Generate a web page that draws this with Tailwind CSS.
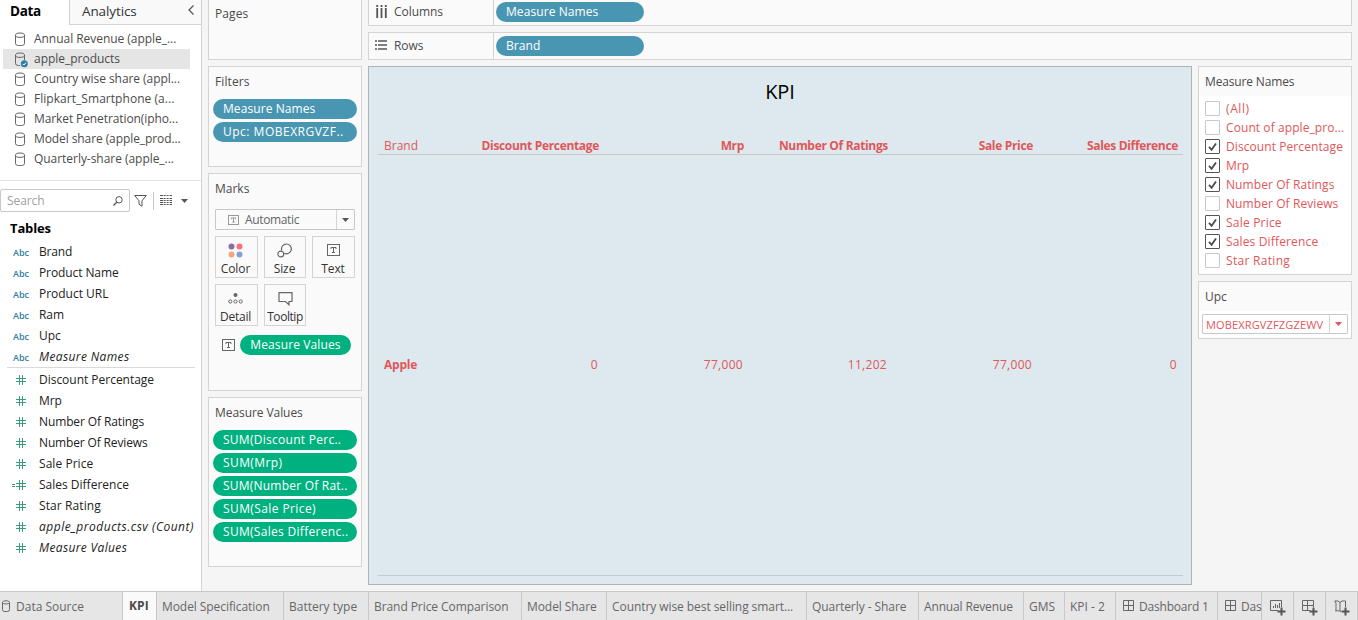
<!DOCTYPE html>
<html lang="en">
<head>
<meta charset="utf-8">
<title>KPI</title>
<script src="https://cdn.jsdelivr.net/npm/@tailwindcss/browser@4"></script>
</head>
<body class="w-[1358px] h-[620px] overflow-hidden bg-[#f5f5f5] font-['Open_Sans','Noto_Sans',sans-serif] text-[12px] leading-[20px] tracking-[-0.07px] text-[#4b4b4b] whitespace-nowrap">
<svg class="hidden">
  <symbol id="db" viewBox="0 0 12 15"><g fill="none" stroke="#666"><ellipse cx="6" cy="3.200" rx="4.500" ry="2.200"/><path d="M1.500 3.200V11.500Q1.500 13.500 4.500 13.500H7.500Q10.500 13.500 10.500 11.500V3.200"/></g></symbol>
  <symbol id="dbc" viewBox="0 0 14 16"><g fill="none" stroke="#666"><ellipse cx="6" cy="3.200" rx="4.500" ry="2.200"/><path d="M1.500 3.200V11.500Q1.500 13.500 4.500 13.500H6M10.500 3.200V8"/></g><circle cx="10.300" cy="11.800" r="3.500" fill="#2f7ea3"/><path d="M8.600 11.900l1.200 1.200 2.200-2.500" fill="none" stroke="#fff"/></symbol>
  <symbol id="hash" viewBox="0 0 10 10"><path d="M3.500 0v10M6.500 0v10M0 3.500h10M0 6.500h10" fill="none" stroke="#3a9d7d"/></symbol>
  <symbol id="ticon" viewBox="0 0 13 12"><rect x=".5" y=".5" width="12" height="11" fill="none" stroke="currentColor"/><path d="M4 5V3.500h5V5M6.500 3.500v5M5 8.500h3" fill="none" stroke="currentColor"/></symbol>
  <symbol id="tick" viewBox="0 0 15 15"><path d="M4 7.800l2.600 3L11 4.500" fill="none" stroke="#4b4b4b" stroke-width="1.800"/></symbol>
  <symbol id="grid" viewBox="0 0 11 11"><path d="M.5.5h10v10H.5zM5.500 0v11M0 5.500h11" fill="none" stroke="#666"/></symbol>
</svg>
<div class="flex flex-col h-[620px]">
<div class="flex h-[591px]">

  <!-- data pane -->
  <aside class="w-[202px] h-full bg-white border-r border-[#d4d4d4] shrink-0">
    <div class="flex h-[25px] text-[13.500px] text-[#333]">
      <div class="w-[69px] pl-[10px] pt-[1px] font-bold text-black tracking-[-0.35px]">Data</div>
      <div class="flex-1 flex justify-between bg-[#f9f9f9] border-l border-b border-[#d4d4d4] pl-3 pr-[7px] pt-[1px]"><span class="tracking-[-0.1px]">Analytics</span>
        <svg class="w-[6px] h-[10px] mt-1" viewBox="0 0 6 10"><path d="M5.500.5L1 5l4.500 4.500" fill="none" stroke="#555" stroke-width="1.200"/></svg></div>
    </div>
    <div class="pt-[4px] h-[156px] border-b border-[#e0e0e0]">
      <div class="flex h-5 pl-[14px]"><svg class="w-3 h-[15px] mt-[3px] mr-2"><use href="#db"/></svg><span class="tracking-[-0.04px]">Annual Revenue (apple_...</span></div>
      <div class="flex h-5 ml-[3px] mr-[11px] pl-[11px] bg-[#e5e5e5]"><svg class="w-[14px] h-4 mt-[3px] mr-1.5"><use href="#dbc"/></svg><span class="tracking-[-0.02px]">apple_products</span></div>
      <div class="flex h-5 pl-[14px]"><svg class="w-3 h-[15px] mt-[3px] mr-2"><use href="#db"/></svg><span class="tracking-[-0.06px]">Country wise share (appl...</span></div>
      <div class="flex h-5 pl-[14px]"><svg class="w-3 h-[15px] mt-[3px] mr-2"><use href="#db"/></svg><span class="tracking-[0.04px]">Flipkart_Smartphone (a...</span></div>
      <div class="flex h-5 pl-[14px]"><svg class="w-3 h-[15px] mt-[3px] mr-2"><use href="#db"/></svg><span class="tracking-[-0.1px]">Market Penetration(ipho...</span></div>
      <div class="flex h-5 pl-[14px]"><svg class="w-3 h-[15px] mt-[3px] mr-2"><use href="#db"/></svg><span class="tracking-[-0.09px]">Model share (apple_prod...</span></div>
      <div class="flex h-5 pl-[14px]"><svg class="w-3 h-[15px] mt-[3px] mr-2"><use href="#db"/></svg><span class="tracking-[-0.04px]">Quarterly-share (apple_...</span></div>
    </div>
    <div class="flex items-center mt-2 h-[23px]">
      <div class="flex items-center justify-between w-[130px] h-[23px] border border-[#c8c8c8] rounded-[2px] pl-[6px] pr-[6px] text-[#a0a0a0]"><span>Search</span>
        <svg class="w-[10px] h-[10px]" viewBox="0 0 10 10"><circle cx="6" cy="3.800" r="3.200" fill="none" stroke="#555"/><path d="M3.700 6.200L.5 9.500" stroke="#555" stroke-width="1.300"/></svg></div>
      <svg class="w-[13px] h-[12px] ml-1" viewBox="0 0 13 12"><path d="M.7.5h11.600L8 5.800v5.400L5 9.200V5.800z" fill="none" stroke="#555"/></svg>
      <div class="w-px h-[18px] bg-[#c8c8c8] ml-[6px]"></div>
      <svg class="w-[12px] h-[10px] ml-[6px] mb-[2px]" viewBox="0 0 12 10"><path d="M0 .5h12M0 3.500h12M0 5.500h12M0 7.500h12M0 9.500h12" stroke="#555" stroke-dasharray="3 .6 2 1 2 1 3"/></svg>
      <svg class="w-[7px] h-[4px] ml-[9px]" viewBox="0 0 7 4"><path d="M0 0h7L3.500 4z" fill="#555"/></svg>
    </div>
    <div class="pl-[10px] mt-[5px] h-[24px] font-bold text-[13px] leading-[22px] text-black tracking-[-0.15px]">Tables</div>
    <div class="text-[#222] leading-[21px]">
      <div class="flex h-[21px] pl-[13px]"><b class="w-[26px] text-[9px] font-semibold text-[#2f7ea3] pt-px">Abc</b><span class="tracking-[-0.2px]">Brand</span></div>
      <div class="flex h-[21px] pl-[13px]"><b class="w-[26px] text-[9px] font-semibold text-[#2f7ea3] pt-px">Abc</b><span class="tracking-[-0.1px]">Product Name</span></div>
      <div class="flex h-[21px] pl-[13px]"><b class="w-[26px] text-[9px] font-semibold text-[#2f7ea3] pt-px">Abc</b><span class="tracking-[-0.02px]">Product URL</span></div>
      <div class="flex h-[21px] pl-[13px]"><b class="w-[26px] text-[9px] font-semibold text-[#2f7ea3] pt-px">Abc</b>Ram</div>
      <div class="flex h-[21px] pl-[13px]"><b class="w-[26px] text-[9px] font-semibold text-[#2f7ea3] pt-px">Abc</b>Upc</div>
      <div class="flex h-[21px] pl-[13px]"><b class="w-[26px] text-[9px] font-semibold text-[#2f7ea3] pt-px">Abc</b><i class="tracking-[0.38px]">Measure Names</i></div>
      <div class="h-px bg-[#d9d9d9] ml-[7px] mr-[6px]"></div>
      <div class="flex items-center h-[21px] pl-4 mt-px"><svg class="w-[10px] h-[10px] mr-[13px]"><use href="#hash"/></svg><span class="tracking-[-0.02px]">Discount Percentage</span></div>
      <div class="flex items-center h-[21px] pl-4"><svg class="w-[10px] h-[10px] mr-[13px]"><use href="#hash"/></svg>Mrp</div>
      <div class="flex items-center h-[21px] pl-4"><svg class="w-[10px] h-[10px] mr-[13px]"><use href="#hash"/></svg><span class="tracking-[-0.12px]">Number Of Ratings</span></div>
      <div class="flex items-center h-[21px] pl-4"><svg class="w-[10px] h-[10px] mr-[13px]"><use href="#hash"/></svg><span class="tracking-[-0.15px]">Number Of Reviews</span></div>
      <div class="flex items-center h-[21px] pl-4"><svg class="w-[10px] h-[10px] mr-[13px]"><use href="#hash"/></svg><span class="tracking-[0.05px]">Sale Price</span></div>
      <div class="flex items-center h-[21px] pl-3"><svg class="w-[14px] h-[10px] mr-[13px]" viewBox="0 0 14 10"><path d="M7.500 0v10M10.500 0v10M4 3.500h10M4 6.500h10M0 4.500h3M0 6.500h3" fill="none" stroke="#3a9d7d"/></svg><span class="tracking-[0px]">Sales Difference</span></div>
      <div class="flex items-center h-[21px] pl-4"><svg class="w-[10px] h-[10px] mr-[13px]"><use href="#hash"/></svg><span class="tracking-[0.1px]">Star Rating</span></div>
      <div class="flex items-center h-[21px] pl-4"><svg class="w-[10px] h-[10px] mr-[13px]"><use href="#hash"/></svg><i class="tracking-[0.5px]">apple_products.csv (Count)</i></div>
      <div class="flex items-center h-[21px] pl-4"><svg class="w-[10px] h-[10px] mr-[13px]"><use href="#hash"/></svg><i class="tracking-[0.36px]">Measure Values</i></div>
    </div>
  </aside>

  <!-- shelf cards -->
  <div class="w-[154px] ml-[6px] shrink-0 flex flex-col">
    <section class="h-[60px] bg-[#fafafa] border border-t-0 border-[#d4d4d4] pl-[6px] pt-[4px] tracking-[0.1px]">Pages</section>
    <section class="h-[101px] mt-[6px] bg-[#fafafa] border border-[#d4d4d4] pt-[5px]">
      <div class="pl-[6px] h-[27px] tracking-[0.1px]">Filters</div>
      <div class="mx-1 h-5 rounded-full bg-[#4996b2] text-white font-medium pl-[10px] tracking-[0.08px]">Measure Names</div>
      <div class="mx-1 mt-[3px] h-5 rounded-full bg-[#4996b2] text-white font-medium pl-[10px] tracking-[0.5px]">Upc: MOBEXRGVZF..</div>
    </section>
    <section class="h-[218px] mt-[6px] bg-[#fafafa] border border-[#d4d4d4] pt-[5px]">
      <div class="pl-[6px] h-[30px] tracking-[0px]">Marks</div>
      <div class="flex items-center mx-[6px] h-[21px] border border-[#c8c8c8] rounded-[1px] text-[#666]"><svg class="w-[11px] h-[10px] ml-[12px] mr-[6px] text-[#888]" viewBox="0 0 13 12"><use href="#ticon"/></svg><span class="flex-1 tracking-[-0.35px]">Automatic</span><span class="flex items-center justify-center w-[18px] h-full border-l border-[#d4d4d4]"><svg class="w-[7px] h-[4px]" viewBox="0 0 7 4"><path d="M0 0h7L3.500 4z" fill="#555"/></svg></span></div>
      <div class="grid grid-cols-[43px_42px_43px] gap-x-[6px] gap-y-[6px] mx-[6px] mt-[6px] text-center text-[#333]">
        <div class="h-[42px] border border-[#d4d4d4] flex flex-col items-center justify-between pt-[6px] pr-[2px]"><svg class="w-[15px] h-[15px]" viewBox="0 0 15 15"><circle cx="3.500" cy="3.500" r="3" fill="#87709e"/><circle cx="11.500" cy="3.500" r="3" fill="#fa707c"/><circle cx="3.500" cy="11.500" r="3" fill="#f3a878"/><circle cx="11.500" cy="11.500" r="3" fill="#80a4d0"/></svg><span class="leading-[16px]">Color</span></div>
        <div class="h-[42px] border border-[#d4d4d4] flex flex-col items-center justify-between pt-[6px] pr-[1px]"><svg class="w-[15px] h-[15px]" viewBox="0 0 15 15"><path d="M4.800 7.600A4.900 4.900 0 1 1 7.200 10.300" fill="none" stroke="#666" stroke-width="1.200"/><circle cx="3.800" cy="11" r="2.900" fill="none" stroke="#666" stroke-width="1.200"/></svg><span class="leading-[16px]">Size</span></div>
        <div class="h-[42px] border border-[#d4d4d4] flex flex-col items-center justify-between pt-[7px] pr-[1px]"><svg class="w-[13px] h-[12px] text-[#666]"><use href="#ticon"/></svg><span class="leading-[16px]">Text</span></div>
        <div class="h-[42px] border border-[#d4d4d4] flex flex-col items-center justify-between pt-[8px] pr-[2px]"><svg class="w-[15px] h-[11px]" viewBox="0 0 15 11"><circle cx="7.500" cy="2" r="2" fill="#666"/><g fill="none" stroke="#666"><circle cx="2.300" cy="8.500" r="1.600"/><circle cx="7.500" cy="8.500" r="1.600"/><circle cx="12.700" cy="8.500" r="1.600"/></g></svg><span class="leading-[16px] tracking-[-0.25px]">Detail</span></div>
        <div class="h-[42px] border border-[#d4d4d4] flex flex-col items-center justify-between pt-[7px]"><svg class="w-[15px] h-[14px]" viewBox="0 0 15 14"><path d="M1 .7h13v8.800h-3v3.300L7.500 9.500H1z" fill="none" stroke="#666" stroke-width="1.200"/></svg><span class="leading-[16px] tracking-[-0.45px]">Tooltip</span></div>
      </div>
      <div class="flex items-center mt-[9px] ml-[13px]"><svg class="w-[13px] h-[12px] text-[#666] mr-[5px]"><use href="#ticon"/></svg><span class="w-[111px] h-5 rounded-full bg-[#00b180] text-white font-medium text-center tracking-[0.12px]">Measure Values</span></div>
    </section>
    <section class="h-[170px] mt-[6px] bg-[#fafafa] border border-[#d4d4d4] pt-[5px]">
      <div class="pl-[6px] h-[27px]">Measure Values</div>
      <div class="flex flex-col gap-[3px] mx-1 text-white font-medium">
        <div class="h-5 rounded-full bg-[#00b180] pl-[10px] tracking-[0.27px]">SUM(Discount Perc..</div>
        <div class="h-5 rounded-full bg-[#00b180] pl-[10px] tracking-[0.4px]">SUM(Mrp)</div>
        <div class="h-5 rounded-full bg-[#00b180] pl-[10px] tracking-[0.22px]">SUM(Number Of Rat..</div>
        <div class="h-5 rounded-full bg-[#00b180] pl-[10px] tracking-[0.4px]">SUM(Sale Price)</div>
        <div class="h-5 rounded-full bg-[#00b180] pl-[10px] tracking-[0.3px]">SUM(Sales Differenc..</div>
      </div>
    </section>
  </div>

  <!-- shelves and view -->
  <div class="w-[984px] ml-[6px] shrink-0">
    <div class="flex h-[26px] bg-[#fafafa] border border-t-0 border-[#d4d4d4]">
      <div class="flex w-[125px] border-r border-[#d4d4d4] pl-[7px] pt-[2px]"><svg class="w-[11px] h-[13px] mt-[3px] mr-[7px]" viewBox="0 0 11 13"><path d="M1.200 0v2M5.500 0v2M9.800 0v2M1.200 3v10M5.500 3v10M9.800 3v10" stroke="#555" stroke-width="1.800"/></svg><span class="tracking-[-0.05px]">Columns</span></div>
      <div class="ml-[2px] mt-[2px] w-[148px] h-5 rounded-full bg-[#4996b2] text-white font-medium pl-[10px] tracking-[0.08px]">Measure Names</div>
    </div>
    <div class="flex h-[28px] mt-[6px] bg-[#fafafa] border border-[#d4d4d4]">
      <div class="flex w-[125px] border-r border-[#d4d4d4] pl-[6px] pt-[3px]"><svg class="w-[12px] h-[10px] mt-[4px] mr-[7px]" viewBox="0 0 12 10"><path d="M0 1h2M0 5h2M0 9h2M3 1h9M3 5h9M3 9h9" stroke="#555" stroke-width="1.700"/></svg>Rows</div>
      <div class="ml-[2px] mt-[3px] w-[148px] h-5 rounded-full bg-[#4996b2] text-white font-medium pl-[10px] tracking-[0.1px]">Brand</div>
    </div>
    <div class="flex mt-[6px]">
      <main class="w-[824px] h-[519px] bg-[#dde9ee] border border-[#b0b4b6] px-[9px]">
        <h1 class="text-center text-[20px] leading-[28px] pt-[11px] h-[69px] text-black font-medium tracking-[-0.1px]">KPI</h1>
        <div class="grid grid-cols-[73px_148px_145px_144px_145px_145px] h-[19px] w-[805px] border-b border-[#c8c8c8] text-[#e15759] font-bold text-right leading-[20px] tracking-[-0.33px]">
          <span class="font-normal text-left pl-[6px] tracking-[0px]">Brand</span><span>Discount Percentage</span><span>Mrp</span><span>Number Of Ratings</span><span>Sale Price</span><span>Sales Difference</span>
        </div>
        <div class="grid grid-cols-[72px_148px_145px_144px_145px_145px] h-[421px] w-[805px] items-center border-b border-[#c4cace] text-[#e15759] text-right tracking-[0.3px]">
          <span class="font-bold text-left pl-[6px] tracking-[-0.2px]">Apple</span><span>0</span><span>77,000</span><span>11,202</span><span>77,000</span><span>0</span>
        </div>
      </main>
      <aside class="w-[154px] ml-[6px]">
        <section class="h-[209px] bg-white border border-[#d4d4d4]">
          <div class="h-[29px] bg-[#fafafa] pl-[6px] pt-[5px] tracking-[-0.15px]">Measure Names</div>
          <div class="flex flex-col gap-[4px] pt-[5px] pl-[6px] text-[#e15759] leading-[16px] tracking-[0.08px]">
            <div class="flex h-[15px]"><span class="w-[15px] h-[15px] border border-[#c8c8c8] rounded-[1px] mr-[6px]"></span><span class="tracking-[0.6px]">(All)</span></div>
            <div class="flex h-[15px]"><span class="w-[15px] h-[15px] border border-[#c8c8c8] rounded-[1px] mr-[6px]"></span>Count of apple_pro...</div>
            <div class="flex h-[15px]"><span class="w-[15px] h-[15px] border border-[#555] rounded-[1px] mr-[6px]"><svg class="w-[13px] h-[13px]" viewBox="1 1 13 13"><use href="#tick" width="15" height="15"/></svg></span>Discount Percentage</div>
            <div class="flex h-[15px]"><span class="w-[15px] h-[15px] border border-[#555] rounded-[1px] mr-[6px]"><svg class="w-[13px] h-[13px]" viewBox="1 1 13 13"><use href="#tick" width="15" height="15"/></svg></span>Mrp</div>
            <div class="flex h-[15px]"><span class="w-[15px] h-[15px] border border-[#555] rounded-[1px] mr-[6px]"><svg class="w-[13px] h-[13px]" viewBox="1 1 13 13"><use href="#tick" width="15" height="15"/></svg></span>Number Of Ratings</div>
            <div class="flex h-[15px]"><span class="w-[15px] h-[15px] border border-[#c8c8c8] rounded-[1px] mr-[6px]"></span>Number Of Reviews</div>
            <div class="flex h-[15px]"><span class="w-[15px] h-[15px] border border-[#555] rounded-[1px] mr-[6px]"><svg class="w-[13px] h-[13px]" viewBox="1 1 13 13"><use href="#tick" width="15" height="15"/></svg></span><span class="tracking-[0.2px]">Sale Price</span></div>
            <div class="flex h-[15px]"><span class="w-[15px] h-[15px] border border-[#555] rounded-[1px] mr-[6px]"><svg class="w-[13px] h-[13px]" viewBox="1 1 13 13"><use href="#tick" width="15" height="15"/></svg></span><span class="tracking-[0.15px]">Sales Difference</span></div>
            <div class="flex h-[15px]"><span class="w-[15px] h-[15px] border border-[#c8c8c8] rounded-[1px] mr-[6px]"></span><span class="tracking-[0.3px]">Star Rating</span></div>
          </div>
        </section>
        <section class="h-[58px] mt-[6px] bg-white border border-[#d4d4d4]">
          <div class="h-[29px] bg-[#fafafa] pl-[6px] pt-[5px]">Upc</div>
          <div class="flex items-center ml-[3px] mt-[3px] w-[146px] h-[20px] border border-[#c8c8c8] rounded-[1px] text-[#e15759] text-[11px] tracking-[0.15px]"><span class="flex-1 pl-[3px] pt-px">MOBEXRGVZFZGZEWV</span><span class="flex items-center justify-center w-[18px] h-full border-l border-[#d4d4d4]"><svg class="w-[7px] h-[4px]" viewBox="0 0 7 4"><path d="M0 0h7L3.500 4z" fill="#e15759"/></svg></span></div>
        </section>
      </aside>
    </div>
  </div>
</div>

<!-- sheet tabs -->
<footer class="flex h-[29px] bg-[#e6e6e6] border-t border-[#c8c8c8] text-[#666] leading-[30px]">
  <div class="w-[123px] flex border-r border-[#c8c8c8] pl-[1px]"><svg class="w-[10px] h-[12px] mt-[8px] mr-[5px]" viewBox="0 0 10 12"><path d="M1.500 2.500V9.500Q1.500 11.500 3.500 11.500H6.500Q8.500 11.500 8.500 9.500V2.500M1.500 2.500C1.500 .2 8.500 .2 8.500 2.500 8.500 4.400 1.500 4.400 1.500 2.500z" fill="none" stroke="#666"/></svg><span class="tracking-[0px]">Data Source</span></div>
  <div class="w-[34px] bg-[#fafafa] border-r border-[#c8c8c8] pl-[6px] font-bold text-[#4b4b4b] leading-[28px] tracking-[0.1px]">KPI</div>
  <div class="w-[127px] border-r border-[#c8c8c8] pl-[5px]">Model Specification</div>
  <div class="w-[85px] border-r border-[#c8c8c8] pl-[5px] tracking-[0px]">Battery type</div>
  <div class="w-[153px] border-r border-[#c8c8c8] pl-[5px]">Brand Price Comparison</div>
  <div class="w-[85px] border-r border-[#c8c8c8] pl-[5px]">Model Share</div>
  <div class="w-[200px] border-r border-[#c8c8c8] pl-[5px]">Country wise best selling smart...</div>
  <div class="w-[112px] border-r border-[#c8c8c8] pl-[5px]">Quarterly - Share</div>
  <div class="w-[105px] border-r border-[#c8c8c8] pl-[5px] tracking-[-0.15px]">Annual Revenue</div>
  <div class="w-[41px] border-r border-[#c8c8c8] pl-[5px]">GMS</div>
  <div class="w-[51px] border-r border-[#c8c8c8] pl-[5px] tracking-[0px]">KPI - 2</div>
  <div class="w-[102px] flex border-r border-[#c8c8c8] pl-[7px] tracking-[-0.2px]"><svg class="w-[11px] h-[11px] mt-[8px] mr-[5px]"><use href="#grid"/></svg>Dashboard 1</div>
  <div class="w-[44px] flex border-r border-[#c8c8c8] pl-[7px] tracking-[-0.2px]"><svg class="w-[11px] h-[11px] mt-[8px] mr-[5px] shrink-0"><use href="#grid"/></svg>Das</div>
  <div class="w-[32px] flex justify-center pt-[8px] border-r border-[#c8c8c8]"><svg class="w-[16px] h-[16px]" viewBox="0 0 16 16"><path d="M8 10.500H.5V.5h11V7M3.500 8V6M5.500 8V4M7.500 8V5M9.500 8V3" fill="none" stroke="#666"/><path d="M11.500 7.500v8M7.500 11.500h8" stroke="#555" stroke-width="2"/></svg></div>
  <div class="w-[32px] flex justify-center pt-[8px] border-r border-[#c8c8c8]"><svg class="w-[16px] h-[16px]" viewBox="0 0 16 16"><path d="M8 10.500H.5V.5h11V7M5.500.5v10M.5 5.500h11" fill="none" stroke="#666"/><path d="M11.500 7.500v8M7.500 11.500h8" stroke="#555" stroke-width="2"/></svg></div>
  <div class="w-[32px] flex justify-center pt-[8px] border-r border-[#c8c8c8]"><svg class="w-[16px] h-[16px]" viewBox="0 0 16 16"><path d="M7 12L5.500 10.800H1.500L2 10.500V3L.7 1H4L6 2.500 8 1H11.500V7M6 2.500V11" fill="none" stroke="#666"/><path d="M11.500 7.500v8M7.500 11.500h8" stroke="#555" stroke-width="2"/></svg></div>
</footer>
</div>
</body>
</html>
